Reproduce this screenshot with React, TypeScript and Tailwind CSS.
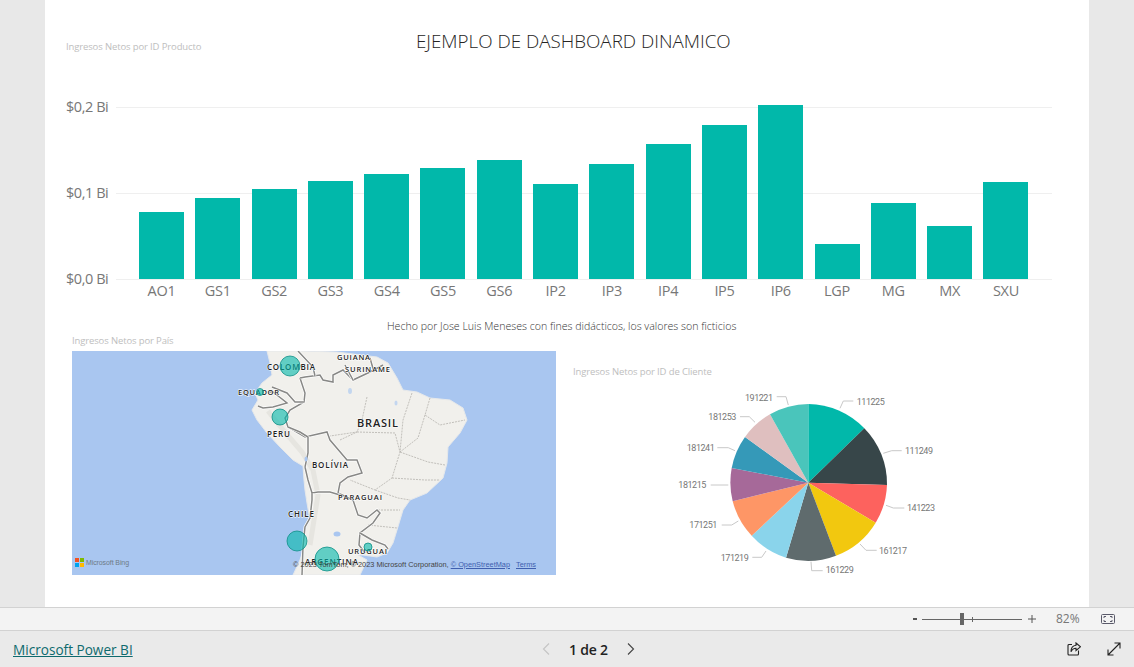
const bars = [
  { id: 'AO1', h: 67 },
  { id: 'GS1', h: 81 },
  { id: 'GS2', h: 90 },
  { id: 'GS3', h: 98 },
  { id: 'GS4', h: 105 },
  { id: 'GS5', h: 111 },
  { id: 'GS6', h: 119 },
  { id: 'IP2', h: 95 },
  { id: 'IP3', h: 115 },
  { id: 'IP4', h: 135 },
  { id: 'IP5', h: 154 },
  { id: 'IP6', h: 174 },
  { id: 'LGP', h: 35 },
  { id: 'MG', h: 76 },
  { id: 'MX', h: 53 },
  { id: 'SXU', h: 97 },
]

const slices = [
  { color: '#01B8AA', from: [148.3, 24], to: [204.3, 48.3] },
  { color: '#374649', from: [204.3, 48.3], to: [227, 105] },
  { color: '#FD625E', from: [227, 105], to: [215.7, 142.7] },
  { color: '#F2C80F', from: [215.7, 142.7], to: [176, 175.7] },
  { color: '#5F6B6D', from: [176, 175.7], to: [126, 177.7] },
  { color: '#8AD4EB', from: [126, 177.7], to: [91.7, 155.7] },
  { color: '#FE9666', from: [91.7, 155.7], to: [72.7, 121.3] },
  { color: '#A66999', from: [72.7, 121.3], to: [71.7, 88] },
  { color: '#3599B8', from: [71.7, 88], to: [85, 57] },
  { color: '#DFBFBF', from: [85, 57], to: [110, 34.3] },
  { color: '#4AC5BB', from: [110, 34.3], to: [148.3, 24] },
]

const pieLabels = [
  { text: '111225', x: 196.7, y: 21.7, line: '180,28.3 183.3,21 193.3,21' },
  { text: '111249', x: 245, y: 70.7, line: '223.3,73.3 231.7,70.7 241.7,70.7' },
  { text: '141223', x: 247, y: 128, line: '226,125.3 233.3,128 244.3,128' },
  { text: '161217', x: 219, y: 170.7, line: '200,164 206,170.3 216.7,170.3' },
  { text: '161229', x: 165.7, y: 190.3, line: '151,181.7 151.7,190.7 162.7,190.7' },
  { text: '171219', x: 60.7, y: 177.7, line: '106,171 101.7,177.3 92.3,177.3' },
  { text: '171251', x: 29.3, y: 144.7, line: '78.3,141 71.7,145 61.7,145' },
  { text: '181215', x: 18.3, y: 105, line: '68.3,105 50.7,105' },
  { text: '181241', x: 26.7, y: 68, line: '75,70.7 68.3,67.7 57.3,67.7' },
  { text: '181253', x: 48.3, y: 36.7, line: '95,42.3 89.3,36.7 80,36.7' },
  { text: '191221', x: 85, y: 17.7, line: '128.3,25 126,16.7 116.7,16.7' },
]

const mapLabels = [
  { text: 'GUIANA', x: 337, y: 360, w: 33, size: 7.5 },
  { text: 'COLOMBIA', x: 267, y: 370, w: 48, size: 8 },
  { text: 'SURINAME', x: 345, y: 372, w: 45, size: 7.5 },
  { text: 'EQUADOR', x: 238, y: 395, w: 41, size: 7.5 },
  { text: 'BRASIL', x: 357, y: 427, w: 41, size: 11 },
  { text: 'PERU', x: 267, y: 437, w: 23, size: 8 },
  { text: 'BOLÍVIA', x: 312, y: 468, w: 36, size: 8 },
  { text: 'PARAGUAI', x: 338, y: 500, w: 44, size: 7.5 },
  { text: 'CHILE', x: 288, y: 517, w: 26, size: 8 },
  { text: 'URUGUAI', x: 348, y: 554, w: 39, size: 7.5 },
  { text: 'ARGENTINA', x: 305, y: 565, w: 53, size: 8 },
]

const mapBubbles = [
  { x: 290, y: 366, r: 10 },
  { x: 260, y: 392, r: 3.5 },
  { x: 280, y: 417, r: 8 },
  { x: 297, y: 541, r: 10 },
  { x: 327, y: 559, r: 12 },
  { x: 368, y: 547, r: 4 },
]

const borders = [
  '300,378 305,393 304,402 290,410 285,418 288,427 305,437 327,432 330,440 347,460 357,460 362,473 348,477 340,483 338,493 353,500 358,515 367,518 377,510 380,513 373,523 360,533 359,545 365,553',
  '360,533 372,540 385,545 388,549',
  '305,467 308,480 312,493 318,492 330,492 340,495',
  '312,493 312,500 310,518 305,527 303,547 302,575',
  '288,427 300,432 308,437 308,453 305,467',
  '268,392 273,392 287,403 273,407 263,408 258,406',
  '272,387 287,393 295,402 304,402',
  '300,378 305,377 320,375 323,380 333,382 333,375 343,370 353,380 370,372 383,365',
  '298,351 313,367 315,376',
  '345,365 353,380',
  '370,358 374,372',
]

const stateLines = [
  'M367 397 L362 420 L357 432 L330 436',
  'M357 432 L395 433 L400 452 L392 478 L375 490 L350 480',
  'M412 393 L403 420 L400 452',
  'M430 398 L425 415 L440 425 L465 420',
  'M425 415 L418 438 L400 452',
  'M400 452 L428 462 L445 465',
  'M392 478 L425 480 L440 480',
  'M375 490 L398 498 L410 500',
  'M378 510 L400 510',
  'M368 525 L397 528',
  'M340 440 L357 432',
]

const SouthAmericaMap = () => {
  return (
    <svg viewBox="72 351 484 224" className="block w-full h-full">
      <defs>
        <filter id="soft">
          <feGaussianBlur stdDeviation="0.5" />
        </filter>
      </defs>
      <rect x="72" y="351" width="484" height="224" fill="#A9C6F0" />
      <g filter="url(#soft)">
        <path
          d="M267 351 L270 363 L272 375 L262 383 L255 393 L258 400 L252 410 L257 420 L267 433 L280 447 L293 460 L303 466 L304 480 L305 490 L307 503 L310 520 L305 530 L304 547 L300 560 L293 575 L360 575 L367 560 L358 555 L363 555 L377 557 L387 553 L393 543 L397 530 L403 510 L410 500 L427 493 L443 478 L447 463 L448 447 L460 433 L467 420 L463 408 L450 400 L430 398 L417 392 L403 390 L397 378 L388 363 L377 357 L337 352 L303 351 Z"
          fill="#F1F0EC"
          stroke="#E6E8EA"
          strokeWidth="1"
        />
        {/* Andes */}
        <path d="M268 411 L284 431 L302 452 L313 470 L318 495 L314 520 L310 545" fill="none" stroke="#E6E5E0" strokeWidth="5" />
        {stateLines.map((d) => (
          <path key={d} d={d} fill="none" stroke="#B5B3AD" strokeWidth="0.8" strokeDasharray="2 1" />
        ))}
        {borders.map((p) => (
          <g key={p}>
            <polyline points={p} fill="none" stroke="#FFFFFF" strokeWidth="2.8" />
            <polyline points={p} fill="none" stroke="#888886" strokeWidth="1.5" />
          </g>
        ))}
        <ellipse cx="337" cy="534" rx="3.5" ry="2.5" fill="#A9C6F0" />
        <ellipse cx="306" cy="459" rx="1.5" ry="2.5" fill="#A9C6F0" />
        <ellipse cx="350" cy="391" rx="2" ry="3" fill="#C3D6EF" />
        <ellipse cx="396" cy="403" rx="1.5" ry="2.5" fill="#C3D6EF" />
      </g>
      {mapLabels.map((l) => (
        <text
          key={l.text}
          x={l.x}
          y={l.y}
          textLength={l.w}
          lengthAdjust="spacing"
          fontSize={l.size}
          fontWeight="600"
          fill="#222222"
          stroke="#FFFFFF"
          strokeWidth="1"
          paintOrder="stroke"
          fontFamily="'Open Sans', sans-serif"
        >
          {l.text}
        </text>
      ))}
      {mapBubbles.map((b) => (
        <circle key={b.x} cx={b.x} cy={b.y} r={b.r} fill="#01B8AA" fillOpacity="0.6" stroke="#0E8F86" strokeWidth="0.8" />
      ))}
    </svg>
  )
}

const ClientPie = () => {
  return (
    <svg viewBox="0 0 300 200" className="block w-[300px] h-[200px]">
      {slices.map((s) => (
        <path
          key={s.color}
          d={`M148.3 102.7 L${s.from[0]} ${s.from[1]} A78.7 78.7 0 0 1 ${s.to[0]} ${s.to[1]} Z`}
          fill={s.color}
        />
      ))}
      {pieLabels.map((l) => (
        <g key={l.text}>
          <polyline points={l.line} fill="none" stroke="#C8C8C8" strokeWidth="1" />
          <text x={l.x} y={l.y + 3} textLength="28" fontSize="9" fill="#777777" fontFamily="Roboto, sans-serif">
            {l.text}
          </text>
        </g>
      ))}
    </svg>
  )
}

const ProductChart = () => {
  return (
    <div className="flex">
      {/* Eje Y */}
      <div className="w-[71px] h-[190px] flex flex-col justify-between pl-[21px] text-[14.5px] leading-[18px] tracking-[-0.45px] text-[#777777] whitespace-nowrap">
        <span>$0,2 Bi</span>
        <span>$0,1 Bi</span>
        <span>$0,0 Bi</span>
      </div>
      <div className="w-[936px] pt-[9px]">
        <div className="relative h-[173px] flex items-end gap-[11.3px] pl-[23px]">
          <div className="absolute inset-0 flex flex-col justify-between">
            <div className="h-px bg-[#EFEFEF]" />
            <div className="h-px bg-[#EFEFEF]" />
            <div className="h-px bg-[#EFEFEF]" />
          </div>
          {bars.map((b) => (
            <div key={b.id} className="relative w-[45px] bg-[#01B8AA] mb-px" style={{ height: b.h }} />
          ))}
        </div>
        <div className="flex gap-[11.3px] pl-[23px] h-[22px] items-center text-[14.5px] tracking-[-0.3px] text-[#777777]">
          {bars.map((b) => (
            <div key={b.id} className="w-[45px] text-center">
              {b.id}
            </div>
          ))}
        </div>
      </div>
    </div>
  )
}

const StatusBar = () => {
  return (
    <div className="h-[24px] shrink-0 flex items-center justify-end pr-[19px] bg-[#F3F3F3] border-y border-[#D2D2D2] text-[#666666]">
      <div className="w-[4px] h-[2px] bg-[#555555]" />
      <div className="relative w-[100px] h-px bg-[#666666] ml-[5px]">
        <div className="absolute left-[38px] top-[-6px] w-[4px] h-[12px] bg-[#666666]" />
        <div className="absolute left-[50px] top-[-2px] w-px h-[5px] bg-[#666666]" />
      </div>
      <svg viewBox="0 0 8 8" className="w-[8px] h-[8px] ml-[6px]">
        <path d="M4 0V8M0 4H8" stroke="#555555" strokeWidth="1" />
      </svg>
      <span className="ml-[20px] w-[23px] text-[12px] text-[#777777]">82%</span>
      <svg viewBox="0 0 14 10" className="w-[14px] h-[10px] ml-[22px]" fill="none" stroke="#5A5A6A" strokeWidth="1">
        <rect x="0.5" y="0.5" width="13" height="9" rx="1" />
        <path d="M3 4V2.500H5M9 2.500H11V4M11 6V7.500H9M5 7.500H3V6" />
      </svg>
    </div>
  )
}

const Footer = () => {
  return (
    <div className="h-[36px] shrink-0 flex items-center bg-[#EAEAEA] pl-[13px] pr-[13px]">
      <a href="#" className="w-[120px] pt-[2px] text-[13.6px] text-[#0E6A6E] underline whitespace-nowrap">
        Microsoft Power BI
      </a>
      <div className="flex items-center ml-[408px]">
        <svg viewBox="0 0 10 14" className="w-[10px] h-[14px]" fill="none" stroke="#C4C4C4" strokeWidth="1.100">
          <path d="M8 1.500 L2.500 7 L8 12.500" />
        </svg>
        <span className="ml-[18px] w-[38px] text-[14px] font-semibold text-[#222222] whitespace-nowrap tracking-[-0.2px]">
          1 de 2
        </span>
        <svg viewBox="0 0 10 14" className="w-[10px] h-[14px] ml-[19px]" fill="none" stroke="#444444" strokeWidth="1.100">
          <path d="M2 1.500 L7.500 7 L2 12.500" />
        </svg>
      </div>
      <div className="flex items-center ml-auto gap-[26px]">
        <svg viewBox="0 0 14 14" className="w-[14px] h-[14px]" fill="none" stroke="#222222" strokeWidth="1.100">
          <path d="M5 2.500H2.200A1 1 0 0 0 1 3.500V12A1 1 0 0 0 2 13H10.500A1 1 0 0 0 11.500 12V8.500" />
          <path d="M9 1 L13.500 4.800 L9 8.500 V6.300 C6.800 6.300 5.200 7.300 4 9.800 C4 6.300 6 3.600 9 3.300 Z" />
        </svg>
        <svg viewBox="0 0 14 14" className="w-[14px] h-[14px]" fill="none" stroke="#222222" strokeWidth="1.100">
          <path d="M1 13 L13 1M7.500 1H13V6.500M1 7.500V13H6.500" />
        </svg>
      </div>
    </div>
  )
}

export default function App() {
  return (
    <div className="h-[667px] flex flex-col bg-[#E8E8E8] font-['Open_Sans',sans-serif] overflow-hidden">
      <main className="flex-1 min-h-0">
        <div className="ml-[45px] w-[1044px] h-full bg-white">
          {/* Заголовок */}
          <div className="h-[98px] flex items-start">
            <div className="w-[371px] pl-[21px] pt-[40px] text-[9.5px] leading-[14px] tracking-[-0.13px] text-[#BEBEBE] whitespace-nowrap">
              Ingresos Netos por ID Producto
            </div>
            <div className="pt-[28px] text-[18.8px] leading-[26px] font-light text-[#252423] whitespace-nowrap">
              EJEMPLO DE DASHBOARD DINAMICO
            </div>
          </div>
          <ProductChart />
          <div className="mt-[17px] pl-[342px] h-[14px] text-[10.6px] leading-[14px] font-light text-[#333333] whitespace-nowrap">
            Hecho por Jose Luis Meneses con fines didácticos, los valores son ficticios
          </div>
          <div className="flex">
            <div className="ml-[27px] w-[484px]">
              <div className="mt-px mb-[3px] h-[14px] text-[9.5px] leading-[14px] tracking-[-0.13px] text-[#BEBEBE]">
                Ingresos Netos por País
              </div>
              <div className="relative w-[484px] h-[224px] font-['Liberation_Sans',sans-serif]">
                <SouthAmericaMap />
                {/* Bing logo */}
                <div className="absolute left-[3px] bottom-[7px] flex items-center gap-[2px] text-[7px] tracking-[-0.1px] text-[#6E7A86]">
                  <div className="grid grid-cols-2 gap-px w-[9px] h-[9px]">
                    <div className="bg-[#F25022]" />
                    <div className="bg-[#7FBA00]" />
                    <div className="bg-[#00A4EF]" />
                    <div className="bg-[#FFB900]" />
                  </div>
                  Microsoft Bing
                </div>
                <div className="absolute right-[20px] bottom-[5px] text-[7.35px] leading-[10px] text-[#444444] whitespace-nowrap">
                  © 2023 TomTom, © 2023 Microsoft Corporation,{' '}
                  <span className="text-[#3F5FAF] underline">© OpenStreetMap</span>
                  <span className="ml-[6px] text-[#3F5FAF] underline">Terms</span>
                </div>
              </div>
            </div>
            <div className="ml-[17px] pt-[32px]">
              <div className="h-[14px] mb-px text-[9.5px] leading-[14px] tracking-[-0.13px] text-[#BEBEBE] whitespace-nowrap">
                Ingresos Netos por ID de Cliente
              </div>
              <div className="ml-[87px]">
                <ClientPie />
              </div>
            </div>
          </div>
        </div>
      </main>
      <StatusBar />
      <Footer />
    </div>
  )
}
